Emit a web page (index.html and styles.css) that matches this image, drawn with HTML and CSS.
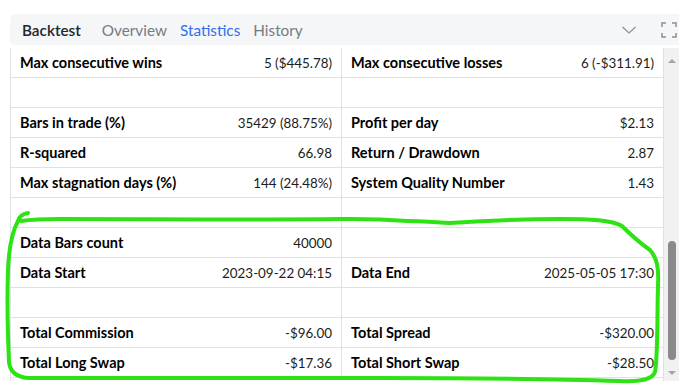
FILE: index.html
```html
<!DOCTYPE html>
<html lang="en">
<head>
    <meta charset="UTF-8">
    <meta name="viewport" content="width=device-width, initial-scale=1.0">
    <title>Backtest Statistics</title>
    <link rel="stylesheet" href="styles.css">
</head>
<body>
    <div class="panel">
        <div class="tabs-bar">
            <span class="tab tab-title">Backtest</span>
            <span class="tab">Overview</span>
            <span class="tab active">Statistics</span>
            <span class="tab">History</span>
            <div class="actions">
                <svg class="icon-chevron" width="16" height="10" viewBox="0 0 16 10">
                    <polyline points="1.5,2 8,8 14.5,2" fill="none" stroke="#8a8f96" stroke-width="1.2"/>
                </svg>
                <svg class="icon-full" width="16" height="16" viewBox="0 0 16 16">
                    <path d="M1 5V1H5 M11 1H15V5 M15 11V15H11 M5 15H1V11" fill="none" stroke="#8a8f96" stroke-width="1.5"/>
                </svg>
            </div>
        </div>

        <div class="body">
            <div class="stats">
                <div class="row">
                    <div class="cell"><span class="label">Max consecutive wins</span><span class="value">5 ($445.78)</span></div>
                    <div class="cell"><span class="label">Max consecutive losses</span><span class="value">6 (-$311.91)</span></div>
                </div>
                <div class="row">
                    <div class="cell"></div>
                    <div class="cell"></div>
                </div>
                <div class="row">
                    <div class="cell"><span class="label">Bars in trade (%)</span><span class="value">35429 (88.75%)</span></div>
                    <div class="cell"><span class="label">Profit per day</span><span class="value">$2.13</span></div>
                </div>
                <div class="row">
                    <div class="cell"><span class="label">R-squared</span><span class="value">66.98</span></div>
                    <div class="cell"><span class="label">Return / Drawdown</span><span class="value">2.87</span></div>
                </div>
                <div class="row">
                    <div class="cell"><span class="label">Max stagnation days (%)</span><span class="value">144 (24.48%)</span></div>
                    <div class="cell"><span class="label">System Quality Number</span><span class="value">1.43</span></div>
                </div>
                <div class="row">
                    <div class="cell"></div>
                    <div class="cell"></div>
                </div>
                <div class="row">
                    <div class="cell"><span class="label">Data Bars count</span><span class="value">40000</span></div>
                    <div class="cell"></div>
                </div>
                <div class="row">
                    <div class="cell"><span class="label">Data Start</span><span class="value">2023-09-22 04:15</span></div>
                    <div class="cell"><span class="label">Data End</span><span class="value">2025-05-05 17:30</span></div>
                </div>
                <div class="row">
                    <div class="cell"></div>
                    <div class="cell"></div>
                </div>
                <div class="row">
                    <div class="cell"><span class="label">Total Commission</span><span class="value">-$96.00</span></div>
                    <div class="cell"><span class="label">Total Spread</span><span class="value">-$320.00</span></div>
                </div>
                <div class="row">
                    <div class="cell"><span class="label">Total Long Swap</span><span class="value">-$17.36</span></div>
                    <div class="cell"><span class="label">Total Short Swap</span><span class="value">-$28.50</span></div>
                </div>
            </div>
            <div class="scrollbar">
                <span class="arrow arrow-up"></span>
                <div class="track"><div class="thumb"></div></div>
                <span class="arrow arrow-down"></span>
            </div>
        </div>

        <!-- hand-drawn highlight around the data section -->
        <svg class="annotation" width="679" height="389" viewBox="0 0 679 389">
            <path d="M28 213 C22 214 19 217 18 221 C12 232 9 245 8 270 C7 300 8 340 9 362 C10 372 16 377 28 378
                     C120 379 250 377 380 378 C480 378 560 379 620 381 C640 382 652 380 655 372
                     C658 355 657 320 658 285 C659 268 657 258 650 250 C640 243 632 236 622 226
                     C612 220 590 219 560 219 C520 219 480 221 450 223 C420 222 380 218 340 219
                     C260 220 150 219 60 219 C40 219 28 220 21 221"
                  fill="none" stroke="#2ee314" stroke-width="4" stroke-linecap="round" stroke-linejoin="round"/>
        </svg>
    </div>
</body>
</html>
```

FILE: styles.css
```css
body {
    margin: 0;
    background-color: #fff;
    font-family: Lato, "Noto Sans", sans-serif;
    color: #212529;
}
.panel {
    position: relative;
    width: 679px;
    height: 389px;
    overflow: hidden;
    padding-top: 14px;
    box-sizing: border-box;
}
.tabs-bar {
    display: flex;
    align-items: center;
    gap: 13px;
    height: 31px;
    margin-left: 10px;
    padding: 0 2px 0 12px;
    background-color: #f5f6f8;
    border-radius: 6px 0 0 6px;
}
.tab {
    font-size: 15.3px;
    color: #757b82;
}
.tab-title {
    font-weight: 600;
    color: #212529;
    margin-right: 8px;
}
.tab.active {
    color: #2f6ff0;
}
.actions {
    margin-left: auto;
    display: flex;
    align-items: center;
    gap: 24px;
}
.body {
    display: flex;
    margin-top: 3px;
    margin-left: 10px;
}
.stats {
    width: 654px;
    border-left: 1px solid #dee2e6;
    border-right: 1px solid #dee2e6;
    box-sizing: border-box;
}
.row {
    display: grid;
    grid-template-columns: 331px 1fr;
    height: 30px;
    border-bottom: 1px solid #dee2e6;
    box-sizing: border-box;
}
.cell {
    display: flex;
    justify-content: space-between;
    align-items: center;
    padding: 0 9px;
}
.cell:first-child {
    border-right: 1px solid #dee2e6;
}
.label {
    font-size: 14.5px;
    font-weight: 700;
    color: #000;
}
.value {
    font-size: 13.4px;
    color: #1a1d20;
}
.scrollbar {
    width: 15px;
    height: 333px;
    background-color: #f1f1f1;
    display: flex;
    flex-direction: column;
    align-items: center;
}
.arrow {
    width: 0;
    height: 0;
    border-left: 4px solid transparent;
    border-right: 4px solid transparent;
}
.arrow-up {
    margin-top: 11px;
    border-bottom: 4px solid #a3a3a3;
}
.arrow-down {
    margin-bottom: 6px;
    border-top: 4px solid #a3a3a3;
}
.track {
    flex: 1;
    width: 100%;
    display: flex;
    flex-direction: column;
    justify-content: flex-end;
    align-items: center;
    padding-bottom: 11px;
    box-sizing: border-box;
}
.thumb {
    width: 8px;
    height: 119px;
    background-color: #8a8a8a;
    border-radius: 4px;
}
.annotation {
    position: absolute;
    left: 0;
    top: 0;
    pointer-events: none;
}
```
